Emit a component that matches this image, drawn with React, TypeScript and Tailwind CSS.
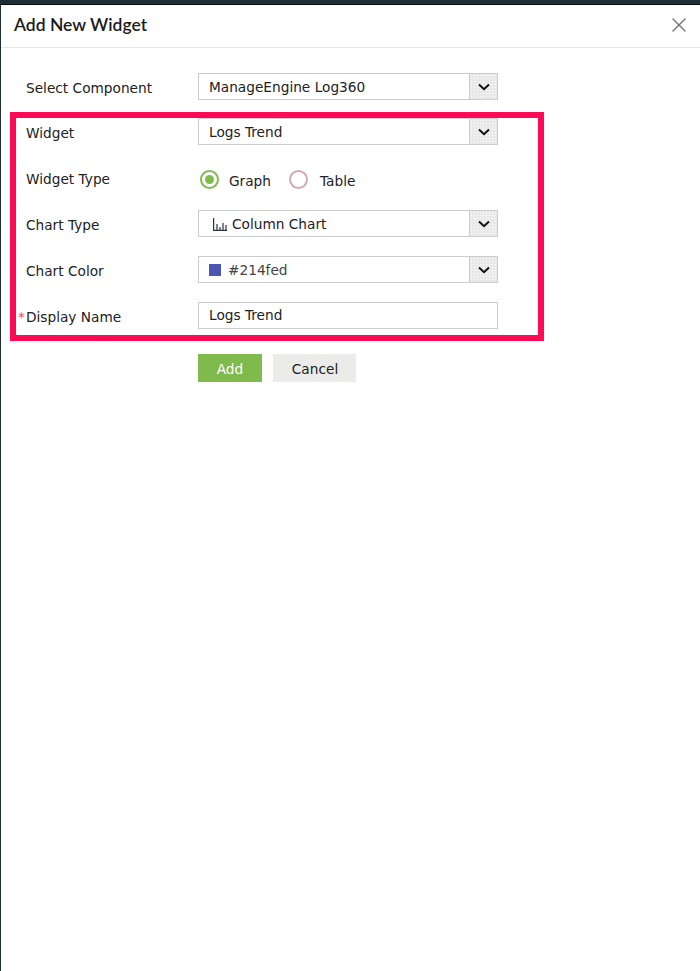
import { X } from "lucide-react";

const bodyFont = "font-['DejaVu_Sans',sans-serif]";

function Chevron() {
  return (
    <svg viewBox="0 0 12 8" className="h-2 w-3" fill="none" stroke="#111" strokeWidth="2">
      <path d="M1 1.5 L6 6.2 L11 1.5" />
    </svg>
  );
}

function ChartIcon() {
  return (
    <svg viewBox="0 0 14 13" className="h-[13px] w-[14px]" fill="none" stroke="#2b3440" strokeWidth="1.2">
      <path d="M0.6 0 V12.4 H14" />
      <path d="M4 6 V12 M7 9 V12 M10 5 V12 M13 7 V12" />
    </svg>
  );
}

function Select({ children }: { children: React.ReactNode }) {
  return (
    <div className="flex h-[27px] w-[300px] items-stretch border border-[#ccc] bg-white">
      <div className="flex flex-1 items-center pl-[10px] pt-[1px] text-[13.7px] text-[#222]">{children}</div>
      <div className="flex w-[28px] items-center justify-center border-l border-[#ccc] bg-[#e9e9e9] bg-[radial-gradient(#fff_0.7px,transparent_0.7px)] bg-[length:3px_3px]">
        <Chevron />
      </div>
    </div>
  );
}

function Row({ label, required, children }: { label: string; required?: boolean; children: React.ReactNode }) {
  return (
    <div className="flex h-[27px] items-center">
      <div className="relative w-[172px] pt-[4px] text-[13.7px] text-[#222]">
        {required && <span className="absolute -left-2 text-[#f0437a]">*</span>}
        {label}
      </div>
      {children}
    </div>
  );
}

export default function App() {
  return (
    <div className={`h-[971px] w-[700px] overflow-hidden bg-[#1f2d36] pl-px pt-1 ${bodyFont}`}>
      <div className="relative h-full border-t border-[#0b0f12] bg-white">
        {/* header */}
        <div className="flex h-[43px] items-center justify-between border-b border-[#e8e8e8] pb-[2px] pl-[13px] pr-[9px]">
          <h1 className="font-['Lato',sans-serif] text-[17.5px] font-semibold text-[#1c1c1c]">Add New Widget</h1>
          <X className="h-6 w-6 text-[#777]" strokeWidth={1.4} />
        </div>

        {/* form */}
        <div className="flex flex-col pl-[25px] pt-[25px]">
          <Row label="Select Component">
            <Select>ManageEngine Log360</Select>
          </Row>
          <div className="mt-[18px] flex flex-col gap-[19px]">
            <Row label="Widget">
              <Select>Logs Trend</Select>
            </Row>
            <Row label="Widget Type">
              <div className="ml-[2px] flex items-center pt-[4px] text-[13.7px] text-[#222]">
                <span className="flex h-[19px] w-[19px] items-center justify-center rounded-full border-2 border-[#7fba4c]">
                  <span className="h-[9px] w-[9px] rounded-full bg-[#7fba4c]" />
                </span>
                <span className="ml-[10px] pt-[3px]">Graph</span>
                <span className="ml-[18px] h-[19px] w-[19px] rounded-full border-2 border-[#cfaab8]" />
                <span className="ml-[12px] pt-[3px]">Table</span>
              </div>
            </Row>
            <Row label="Chart Type">
              <Select>
                <span className="ml-[4px] mr-[5px]">
                  <ChartIcon />
                </span>
                Column Chart
              </Select>
            </Row>
            <Row label="Chart Color">
              <Select>
                <span className="mr-[7px] h-3 w-3 bg-[#4c55b0]" />
                <span className="text-[#444]">#214fed</span>
              </Select>
            </Row>
            <Row label="Display Name" required>
              <div className="flex h-[27px] w-[300px] items-center border border-[#ccc] pl-[10px] text-[13.7px] text-[#222]">
                Logs Trend
              </div>
            </Row>
          </div>
        </div>

        {/* actions */}
        <div className="ml-[197px] mt-[25px] flex gap-[11px] text-[13.7px]">
          <button className="h-7 w-16 bg-[#7fba4c] pt-[2px] text-white">Add</button>
          <button className="h-7 w-[83px] bg-[#ebebe9] pl-px pt-[2px] text-[#222]">Cancel</button>
        </div>

        {/* annotation highlight drawn over the form */}
        <div className="pointer-events-none absolute left-[9px] top-[107px] h-[229px] w-[534px] border-[6px] border-[#ff0a54]" />
      </div>
    </div>
  );
}
